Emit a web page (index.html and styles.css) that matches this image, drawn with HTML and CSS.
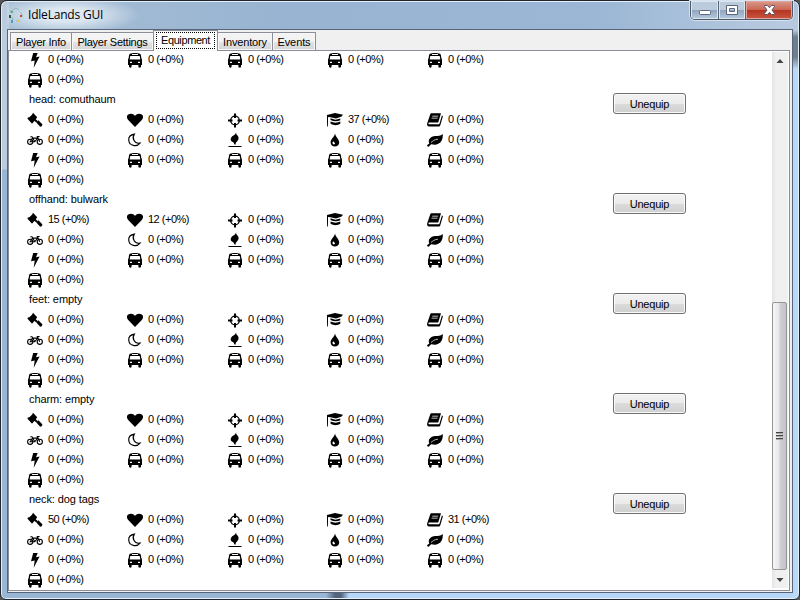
FILE: index.html
```html
<!DOCTYPE html>
<html lang="en">
<head>
<meta charset="utf-8">
<title>IdleLands GUI</title>
<link rel="stylesheet" href="styles.css">
</head>
<body>
<svg class="symbols" width="0" height="0">
  <symbol id="hammer" viewBox="0 0 16 16"><path d="M6 .8 10.200 5.200 9.300 6.500 5.500 11.200 4.800 11.400.5 6.800.8 5.500 2.400 5.300 5.200 2.500z"/><path d="M7.500 7.500 10 9.800" stroke="#000" stroke-width="2"/><path d="M11.400 8.200 15.300 12.200C15.500 13.500 14.500 14.700 13.200 14.700L9.300 10.600z"/></symbol>
  <symbol id="heart" viewBox="0 0 16 16"><path d="M8 15 1.200 8C-1.500 4.600.5 1.700 3.900 1.700 6 1.700 7.500 3 8 4c.5-1 2-2.300 4.100-2.300 3.400 0 5.400 2.900 2.700 6.300z"/></symbol>
  <symbol id="target" viewBox="0 0 16 16"><circle cx="8" cy="8.500" r="4.300" fill="none" stroke="#000" stroke-width="1.300"/><path d="M7 1.500h2V6H7zM7 11h2v4.500H7zM1 7.500h4.500v2H1zM10.500 7.500H15v2h-4.500z"/></symbol>
  <symbol id="cap" viewBox="0 0 16 16"><path d="M0 3 8 1l8 1.700-1.400 1.700L9 6.400 3.500 5.200 1 5v4.500L.8 14.500H0z"/><path d="M3.500 6.300 8.500 7.800 13.300 6.400V8.300C10.500 9.700 6.500 9.600 3.500 8zM3.500 9.500C6.500 11 10.500 11 13.300 9.600v2.200C10.500 13.800 6 13.500 3.500 11.500z"/></symbol>
  <symbol id="book" viewBox="0 0 16 16"><path fill-rule="evenodd" d="M4.700 1.300h9.300l-2.800 9.200H2.100c-1 .4-.8 1.800.4 1.800h9.800l2.600-8.900c1.200.2 1 1 .8 1.700l-2.500 8.500c-.2.7-.8 1-1.400 1H1.900C.1 14.600-.2 12.400.3 11L3.100 2.700c.3-.9.8-1.400 1.600-1.400M5.400 3.700l-.3.800h6l.3-.8zM4.700 5.800l-.3.800h6l.3-.8z"/></symbol>
  <symbol id="bike" viewBox="0 0 16 16"><g fill="none" stroke="#000" stroke-width="1.100"><circle cx="3.200" cy="9.800" r="2.600"/><circle cx="12.800" cy="9.800" r="2.600"/><path d="m3.200 9.800 2.300-3.700h5.200L7.800 9.800zM7.800 9.800 5 4.800H3.400M12.800 9.800 10.300 4.500h2.300"/></g></symbol>
  <symbol id="moon" viewBox="0 0 16 16"><path d="M7.300 2.100C4.500 6.200 7.400 12.200 13 11.100 9.800 15.300 2.100 14 1.700 8 1.600 4.900 4 2.600 7.300 2.100z" fill="none" stroke="#000" stroke-width="1.150"/></symbol>
  <symbol id="fire" viewBox="0 0 16 16"><path d="M9.200 0C8.300 2.700 11.800 3.500 11.600 6.300 11.400 9 8.600 9.800 8.500 12.700 6.300 12 7.400 10.500 5.700 9.900 2.300 8.500 3.800 4.700 6.500 3.400 8.300 2.400 8.700 1.500 9.200 0M1.500 14h13v1h-13z"/></symbol>
  <symbol id="drop" viewBox="0 0 16 16"><path fill-rule="evenodd" d="M8 1.500c.6 3.500 4.200 5.700 4.200 8.900 0 5.300-8.600 5.300-8.600 0C3.600 7.200 7.400 5 8 1.500M6.300 9.300c-1.800 1.600-.3 3.900 1.500 2.800C8.600 11 7 10.500 6.300 9.300"/></symbol>
  <symbol id="leaf" viewBox="0 0 16 16"><path d="M15.800 2c.3 5.700-1.800 9.500-6.500 10.500-2.200.5-4.100-.3-5.400-.1L1.700 14.700c-1 .2-2-.8-1.400-1.700l2-1.500C.4 7.700 4 4.300 8 4.100c3.100-.2 5.500 0 7.800-2.100"/><path d="M4 10.500C6 9 7.200 7.500 11 7.200" fill="none" stroke="#fff" stroke-width=".7"/></symbol>
  <symbol id="bolt" viewBox="0 0 16 16"><path d="M6.200 1h4.500L9 5.200l3.600-.8L6.700 15.800 7.700 8.400 4 9.300z"/></symbol>
  <symbol id="bus" viewBox="0 0 16 16"><path fill-rule="evenodd" d="M3 1.700C5 .6 11 .6 13 1.700c.9.500 1.100 1.800 1.300 4.300.6.500.7 1.200.7 2v5h-1v1.500c0 1.600-2.600 1.600-2.600 0V13H4.600v1.500c0 1.600-2.600 1.600-2.600 0V13H1V8c0-.8.1-1.500.7-2C1.900 3.500 2.100 2.200 3 1.700M5 2v1h6V2zM3.300 4 2.700 7.600h10.600L12.700 4zM3 9.700v1.300h2V9.700zM11 9.700v1.300h2V9.700z"/></symbol>
</svg>
<div class="window">
  <header class="titlebar">
    <svg class="logo" width="16" height="17" viewBox="0 0 16 17"><g fill="none" stroke="#94b9bd"><path d="M5 2.500 8 1l3 2M2 6l1-3 2 1M12 5l2 2v3M4 10l1 3M11 13l-3 1"/></g><path fill="#c74343" d="M12 8h2v2h-2z"/><path fill="#285d3f" d="M1 8h2v3H1z"/><path fill="#e5cc43" d="M9 13h3v2H9z"/><path fill="#489fc9" d="M3 13h2v3H3z"/><path fill="#67aa80" d="M3 4h2v2H3z"/></svg>
    <span class="title">IdleLands GUI</span>
    <div class="controls">
      <span class="control"><svg width="27" height="18"><rect x="8.500" y="9.500" width="11" height="4" rx="1" fill="#fff" stroke="#59667c"/></svg></span>
      <span class="control"><svg width="26" height="18"><path fill="#fff" stroke="#59667c" fill-rule="evenodd" d="M7.500 4.500h11v9h-11zM10.500 7.500v3h5v-3z"/></svg></span>
      <span class="control close"><svg width="46" height="18"><path fill="#fff" stroke="#5b5263" d="M18.500 4.500h3l2 2.200 2-2.200h3v1l-2.500 3.500 2.500 3.500v1h-3l-2-2.200-2 2.200h-3v-1l2.500-3.500-2.500-3.500z"/></svg></span>
    </div>
  </header>
  <main class="client">
    <nav class="tabs">
      <span class="tab info">Player Info</span><span class="tab settings">Player Settings</span><span class="tab selected"><span class="focus">Equipment</span></span><span class="tab inventory">Inventory</span><span class="tab events">Events</span>
    </nav>
    <section class="panel">
      <div class="list" id="list"></div>
      <div class="scrollbar">
        <svg class="arrow" width="16" height="17"><path d="m4.500 11 3.500-4 3.500 4z" fill="#444"/></svg>
        <div class="track"><div class="thumb"><i></i><i></i><i></i></div></div>
        <svg class="arrow" width="16" height="18"><path d="m4.500 8 3.500 4L11.500 8z" fill="#444"/></svg>
      </div>
    </section>
  </main>
</div>
<script src="app.js"></script>
</body>
</html>
```

FILE: styles.css
```css
* { box-sizing: border-box; }
body {
  margin: 0;
  background: #555;
  font-family: "Liberation Sans", Arial, sans-serif;
  font-size: 11px;
  color: #000;
  overflow: hidden;
}
.symbols { position: absolute; }
.window {
  width: 800px;
  height: 600px;
  border: 1px solid #20252b;
  border-radius: 7px 7px 6px 6px;
  padding: 0 6px 6px;
  display: flex;
  flex-direction: column;
  box-shadow: inset 0 0 0 1px #e3f0fa;
  background:
    linear-gradient(#a9c0d9 0, #b9cadf 29px, #707d8c 36px, #707d8c 56px, #b9d9f8 68px, #b9d9f8) right / 8px 100% no-repeat,
    linear-gradient(90deg, #9ab6d5 0 325px, #53657c 334px 340px, #b6d7f8 348px) bottom / 100% 8px no-repeat,
    linear-gradient(#b9cbdd 0, #bccbdb 168px, #98b5d4 169px, #9ab6d5) left / 8px 100% no-repeat,
    linear-gradient(90deg, #a8bfd5, #98b4d2 35%, #9bb7d5 75%, #bacbe0);
}
.titlebar {
  height: 28px;
  flex: none;
  display: flex;
  align-items: flex-start;
  background: radial-gradient(ellipse 75px 19px at 58px 14px, #dce7f1 35%, transparent 100%);
}
.logo { margin: 6px 0 0 1px; }
.title {
  margin: 6px 0 0 4px;
  font: 12px/16px "Open Sans", sans-serif;
  letter-spacing: -.2px;
  white-space: nowrap;
}
.controls {
  display: flex;
  height: 19px;
  margin-left: auto;
  border: 1px solid #4e5968;
  border-top: 0;
  border-radius: 0 0 5px 5px;
  overflow: hidden;
  box-shadow: 0 0 0 1px #d5e1ee;
}
.control {
  box-shadow: inset 0 0 0 1px #dce6f0;
  background: linear-gradient(#bccbdc 50%, #8fa5bd 50%, #b6cadf);
  border-right: 1px solid #566475;
}
.control svg { display: block; }
.control.close {
  border: 0;
  box-shadow: inset 0 0 0 1px #e1a49c;
  background: linear-gradient(#d99a8d, #cb6753 48%, #b33420 50%, #ca5641);
}
.client {
  flex: 1;
  min-height: 0;
  display: flex;
  flex-direction: column;
  border: 1px solid #566579;
  background: #f0f0f0;
  padding: 0 2px 1px 0;
}
.tabs {
  display: flex;
  align-items: flex-end;
  height: 20px;
  flex: none;
  padding-left: 2px;
}
.tab {
  height: 18px;
  border: 1px solid #8b8e98;
  border-bottom: 0;
  background: linear-gradient(#f3f3f3 50%, #e5e5e5 50%, #d5d5d5);
  line-height: 18px;
  text-align: center;
  white-space: nowrap;
  box-shadow: inset 0 0 0 1px #f7f7f7;
}
.info { width: 62px; letter-spacing: -.25px; }
.settings { width: 83px; margin-left: -1px; letter-spacing: -.25px; }
.inventory { width: 55px; border-left: 0; letter-spacing: -.15px; }
.events { width: 44px; margin-left: -1px; letter-spacing: -.1px; }
.tab.selected {
  width: 65px;
  height: 21px;
  margin: 0 0 -1px -1px;
  background: #fff;
  padding: 1px;
  z-index: 1;
  letter-spacing: -.4px;
}
.tab.inventory { margin-left: -1px; width: 56px; border-left: 1px solid #8b8e98; }
.focus {
  display: block;
  height: 17px;
  line-height: 15px;
  margin: 0 1px;
  border: 1px dotted #000;
}
.panel {
  flex: 1;
  min-height: 0;
  display: flex;
  border: 1px solid #8b8e98;
  background: #fff;
  overflow: hidden;
  padding: 1px 1px 2px 0;
}
.list { flex: 1; height: 541px; margin-top: -3px; padding-left: 18px; }
.item { display: flex; justify-content: space-between; }
.name { height: 20px; line-height: 20px; padding-left: 2px; white-space: nowrap; letter-spacing: -.1px; }
.stats { display: grid; grid-template-columns: repeat(5, 100px); grid-auto-rows: 20px; }
.stat { display: flex; align-items: flex-start; line-height: 20px; white-space: nowrap; letter-spacing: -.5px; }
.stat svg { width: 16px; height: 16px; margin: 3px 5px 0 0; }
.button {
  width: 73px;
  height: 21px;
  margin: 4px 86px 0 0;
  padding: 0;
  border: 1px solid #707070;
  border-radius: 3px;
  background: linear-gradient(#f2f2f2, #ebebeb 50%, #dcdcdc 50%, #cfcfcf);
  box-shadow: inset 0 0 0 1px #fafafa;
  font: inherit;
  letter-spacing: -.2px;
}
.scrollbar {
  width: 16px;
  display: flex;
  flex-direction: column;
  background: linear-gradient(90deg, #e4e4e4, #f0f0f0 4px);
}
.arrow { display: block; flex: none; }
.track { flex: 1; display: flex; align-items: flex-end; }
.thumb {
  width: 15px;
  height: 268px;
  border: 1px solid #979797;
  border-radius: 2px;
  background: linear-gradient(90deg, #f6f6f6, #e8e8ea 45%, #cfcfd3 55%, #c3c3c8);
  display: flex;
  flex-direction: column;
  align-items: center;
  justify-content: center;
  gap: 1px;
}
.thumb i { width: 7px; height: 2px; background: linear-gradient(#444 50%, #aaa 50%); }
```

FILE: app.js
```js
const icons = ["hammer", "heart", "target", "cap", "book", "bike", "moon", "fire", "drop", "leaf", "bolt", "bus", "bus", "bus", "bus", "bus"];
const items = [
  { name: "head: comuthaum", values: { 3: 37 } },
  { name: "offhand: bulwark", values: { 0: 15, 1: 12 } },
  { name: "feet: empty", values: {} },
  { name: "charm: empty", values: {} },
  { name: "neck: dog tags", values: { 0: 50, 4: 31 } }
];
const stats = (values, start = 0) => `<div class="stats">${icons.slice(start).map((icon, i) =>
  `<div class="stat"><svg><use href="#${icon}"/></svg><span>${values[i + start] || 0} (+0%)</span></div>`).join("")}</div>`;

document.getElementById("list").innerHTML = stats({}, 10) + items.map(item =>
  `<div class="item"><div><div class="name">${item.name}</div>${stats(item.values)}</div><button class="button">Unequip</button></div>`).join("");
```
